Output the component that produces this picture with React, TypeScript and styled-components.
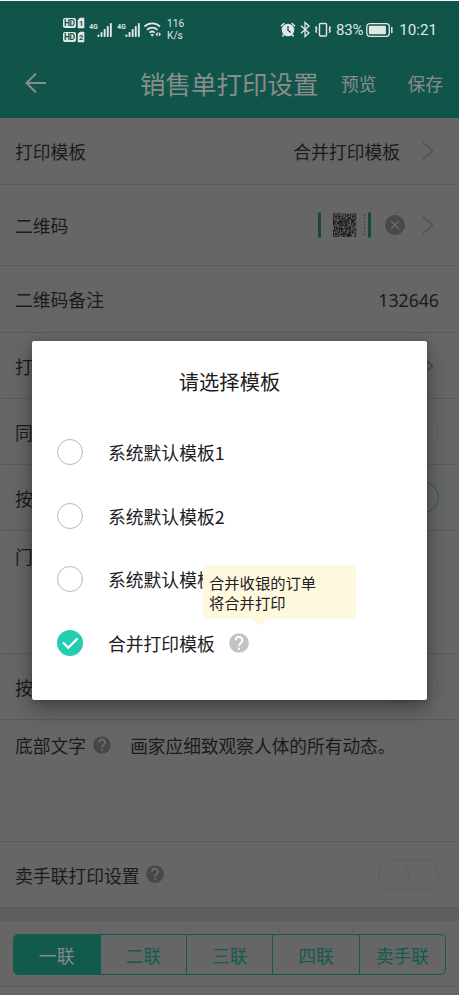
import React from 'react';
import styled, { createGlobalStyle } from 'styled-components';

const GlobalStyle = createGlobalStyle`
  * { box-sizing: border-box; }
  html, body { margin: 0; height: 100%; background: #666; }
  body { overflow: hidden; font-family: "Noto Sans CJK SC", "Noto Sans", sans-serif; color: #1b1b1b; }
`;

const Screen = styled.div`
  position: relative;
  width: 459px;
  height: 995px;
  overflow: hidden;
  background: #666;
  border-top: 1px solid #fafafa;
  font-size: 17.8px;
  line-height: 26px;
`;

const Top = styled.header`
  height: 117px;
  background: #11554a;
  color: #878d8b;
`;

const StatusBar = styled.div`
  height: 58px;
  padding: 0 22px 0 62px;
  display: flex;
  justify-content: space-between;
  align-items: center;
  color: #dfe8e5;
  font-family: Roboto, sans-serif;
`;

const StatusGroup = styled.div`
  display: flex;
  align-items: center;
`;

const Speed = styled.div`
  margin-left: 5px;
  font-size: 10.2px;
  line-height: 12px;
`;

const Percent = styled.span`
  margin: 0 3px 0 3px;
  font-size: 15px;
  letter-spacing: -0.2px;
`;

const Clock = styled.span`
  margin: 0 0 0 6px;
  font-size: 15.2px;
`;

const NavBar = styled.div`
  height: 48px;
  padding: 0 15px 1px 24px;
  display: flex;
  align-items: center;
`;

const Title = styled.h1`
  margin: 0 0 0 92px;
  width: 178px;
  font-size: 25.5px;
  font-weight: 400;
  line-height: 36px;
  white-space: nowrap;
`;

const NavAction = styled.span`
  margin-left: 23px;
  white-space: nowrap;
  & + & { margin-left: 31px; }
`;

const Row = styled.div<{ $h: number; $top?: boolean }>`
  height: ${(p) => p.$h}px;
  padding: ${(p) => (p.$top ? '12px' : '0')} 20px 0 15px;
  display: flex;
  align-items: ${(p) => (p.$top ? 'flex-start' : 'center')};
  border-bottom: 1px solid #5b5b5b;
`;

const Value = styled.div`
  margin-left: auto;
  display: flex;
  align-items: center;
`;

const NumberText = styled.span`
  margin-top: 1px;
  font-family: "Noto Sans", sans-serif;
  font-size: 17.7px;
`;

const Note = styled.span`
  margin-left: 19px;
  font-size: 17.7px;
`;

const Gap = styled.div<{ $h: number }>`
  height: ${(p) => p.$h}px;
  background: #5e5e5e;
`;

const Toggle = styled.span<{ $on?: boolean }>`
  width: 61px;
  height: 31px;
  margin-right: 0.5px;
  display: flex;
  justify-content: ${(p) => (p.$on ? 'flex-end' : 'flex-start')};
  border: 1px solid ${(p) => (p.$on ? '#205f51' : '#5e5e5e')};
  border-radius: 16px;
`;

const Knob = styled.span`
  width: 30px;
  height: 29px;
  border-right: 1px solid #5e5e5e;
  border-radius: 50%;
`;

const TabArea = styled.div`
  height: 66px;
  padding: 13px 13px 0 12.5px;
  border-bottom: 1px solid #5b5b5b;
`;

const Tabs = styled.div`
  height: 41px;
  display: grid;
  grid-template-columns: repeat(5, 1fr);
  border: 1px solid #125b4e;
  border-radius: 5px;
  overflow: hidden;
`;

const Tab = styled.div<{ $active?: boolean }>`
  display: flex;
  justify-content: center;
  align-items: center;
  color: ${(p) => (p.$active ? '#858b89' : '#125b4e')};
  background: ${(p) => (p.$active ? '#115a4c' : 'transparent')};
  & + & { border-left: 1px solid #125b4e; }
`;

const Dialog = styled.section`
  position: absolute;
  left: 32px;
  top: 340px;
  width: 395px;
  height: 359px;
  border-radius: 2px;
  background: #fff;
  color: #202020;
  box-shadow: 0 9px 22px rgba(0, 0, 0, 0.34), 0 1px 6px rgba(0, 0, 0, 0.18);
`;

const DialogTitle = styled.h2`
  margin: 0;
  padding-top: 25px;
  height: 79px;
  text-align: center;
  font-size: 20.3px;
  line-height: 30px;
  font-weight: 400;
`;

const Option = styled.div`
  height: 63.8px;
  padding-left: 25px;
  display: flex;
  align-items: center;
`;

const Radio = styled.span`
  width: 26px;
  height: 26px;
  border: 1px solid #b9b9b9;
  border-radius: 50%;
`;

const OptionText = styled.span`
  margin: 0 14px 0 25px;
`;

const Tooltip = styled.div`
  position: absolute;
  left: 170.5px;
  top: 223.5px;
  width: 153px;
  height: 54.5px;
  padding: 7px 0 0 6.5px;
  border-radius: 4px;
  background: #fef8df;
  font-size: 15.3px;
  line-height: 20.5px;
  &::after {
    content: '';
    position: absolute;
    left: 49px;
    top: 54px;
    border: 7px solid transparent;
    border-top-color: #fef8df;
    border-bottom: 0;
  }
`;

const Help = styled.svg`
  flex: none;
`;

const QrWrap = styled.svg`
  margin-right: 13px;
`;

function HelpIcon({ size, fill, mark }: { size: number; fill: string; mark: string }) {
  return (
    <Help width={size} height={size} viewBox="0 0 20 20" fill="none">
      <circle cx="10" cy="10" r="9.8" fill={fill} />
      <path d="M6.700 7.200a3.300 3.300 0 1 1 5.500 2.400c-1.300 1.100-2.200 1.600-2.200 3.400" stroke={mark} strokeWidth="1.900" />
      <circle cx="10" cy="15.800" r="1.200" fill={mark} />
    </Help>
  );
}

function Chevron({ dark }: { dark?: boolean }) {
  return (
    <svg width="12" height="20" viewBox="0 0 12 20" fill="none">
      <path d="M1 1.5 L10.5 10 L1 18.5" stroke={dark ? '#444' : '#4f4f4f'} strokeWidth="1.2" />
    </svg>
  );
}

function SimBadges() {
  return (
    <svg width="24" height="27" viewBox="0 0 24 27">
      {[1, 15].map((y, i) => (
        <g key={y}>
          <rect x="1" y={y} width="13" height="10" rx="2" fill="#dfe8e5" />
          <path d={`M16 ${y + 2}l2-2h4v10h-6z`} fill="#dfe8e5" stroke="#dfe8e5" strokeLinejoin="round" strokeWidth=".6" />
          <text x="2" y={y + 8.2} fontSize="8.5" fontWeight="700" fontFamily="Roboto, sans-serif" fill="#11554a" textLength="11">HD</text>
          <text x="17" y={y + 8} fontSize="7.5" fontWeight="700" fontFamily="Roboto, sans-serif" fill="#11554a">{i + 1}</text>
        </g>
      ))}
    </svg>
  );
}

function Signal() {
  return (
    <svg width="27.5" height="20" viewBox="0 0 27.5 20">
      <text x="3.3" y="8.500" fontSize="7.8" fontWeight="700" fontFamily="Roboto, sans-serif" fill="#dfe8e5" textLength="8.4" lengthAdjust="spacingAndGlyphs">4G</text>
      {[2.5, 5, 8, 11, 14].map((h, i) => (
        <rect key={h} x={11.5 + i * 3.1} y={17 - h} width="1.9" height={h} rx=".7" fill="#dfe8e5" />
      ))}
    </svg>
  );
}

const WifiGlyph = styled.svg`
  margin: 0 0 2px 2px;
`;

function Wifi() {
  return (
    <WifiGlyph width="19" height="17" viewBox="0 0 19 17" fill="none" stroke="#dfe8e5" strokeWidth="1.8">
      <path d="M1.5 5.5a11 11 0 0 1 15.500 0M4 8.800a7.400 7.400 0 0 1 10.500 0M6.600 11.600a3.800 3.800 0 0 1 5 0" />
      <path d="M7.200 13.300h4l-2 2.500z" fill="#dfe8e5" stroke="none" />
      <path d="M14.700 11l-2.300 2.300 2.300 2.300zM15.800 11l2.300 2.300-2.300 2.300z" fill="#dfe8e5" stroke="none" />
    </WifiGlyph>
  );
}

const DeviceGlyphs = styled.svg`
  margin-bottom: 2px;
`;

function DeviceIcons() {
  return (
    <DeviceGlyphs width="53" height="17" viewBox="0 0 53 17" fill="none" stroke="#dfe8e5">
      <circle cx="8" cy="9" r="6.300" fill="#dfe8e5" stroke="none" />
      <path d="M1 5.200 4.300 2M15 5.200 11.700 2M3.800 13.500l-1.300 2M12.200 13.500l1.300 2" strokeWidth="1.500" />
      <path d="M8 5v4.300l2.800 2.200" stroke="#11554a" strokeWidth="1.300" />
      <path d="M21 4.800l8 7.200-4 3.500v-14L29 5l-8 7.200" strokeWidth="1.300" />
      <rect x="39.500" y="2.500" width="7" height="12.500" rx="1" strokeWidth="1.400" />
      <path d="M36.700 5.300l-1 1.500 1 1.500-1 1.500 1 2M49.300 5.300l1 1.500-1 1.500 1 1.500-1 2" strokeWidth="1.400" />
    </DeviceGlyphs>
  );
}

const BatteryGlyph = styled.svg`
  margin-bottom: 1px;
`;

function Battery() {
  return (
    <BatteryGlyph width="27" height="16" viewBox="0 0 27 16" fill="none">
      <rect x=".8" y="1.700" width="22.500" height="12.600" rx="3" stroke="#dfe8e5" strokeWidth="1.300" />
      <rect x="2.900" y="3.700" width="17" height="8.600" rx="1" fill="#dfe8e5" />
      <path d="M25.800 5v6" stroke="#dfe8e5" strokeWidth="1.500" />
    </BatteryGlyph>
  );
}

const QR_SIZE = 27;
const isFinder = (x: number, y: number) => x < 7 && y < 7;

// Finder squares in three corners, a fixed hash for the data modules.
function qrModule(x: number, y: number): boolean {
  const corners = [[x, y], [QR_SIZE - 1 - x, y], [x, QR_SIZE - 1 - y]];
  for (const [a, b] of corners) {
    if (isFinder(a, b)) {
      const d = Math.max(Math.abs(a - 3), Math.abs(b - 3));
      return d !== 2;
    }
  }
  const n = Math.sin(x * 127.1 + y * 311.7) * 43758.5453;
  return n - Math.floor(n) < 0.6;
}

function QrStrip() {
  let d = '';
  for (let y = 0; y < QR_SIZE; y++) {
    for (let x = 0; x < QR_SIZE; x++) if (qrModule(x, y)) d += `M${x} ${y}h1v1h-1z`;
  }
  return (
    <QrWrap width="55" height="26" viewBox="0 0 55 26">
      <rect x="1" y="0.500" width="3" height="25" fill="#17483b" />
      <path d={d} fill="#1c1c1c" transform="translate(16 1.500) scale(.86)" />
      <path d="M47.500 2v22" stroke="#3c3c3c" strokeWidth="1" strokeDasharray="2 1.500 1 2" />
      <rect x="51" y="0.500" width="3" height="25" fill="#17483b" />
    </QrWrap>
  );
}

const ClearIcon = styled.svg`
  margin-right: -5px;
`;

const ArrowSlot = styled.span`
  display: flex;
  margin: 0 5px 0 22px;
`;

const HelpSlot = styled.span`
  display: flex;
  margin: -1px 0 0 7px;
`;

const HelpSlotTop = styled(HelpSlot)`
  margin-top: 4px;
`;

export default function App() {
  return (
    <>
      <GlobalStyle />
      <Screen>
        <Top>
          <StatusBar>
            <StatusGroup>
              <SimBadges />
              <Signal />
              <Signal />
              <Wifi />
              <Speed>116<br />K/s</Speed>
            </StatusGroup>
            <StatusGroup>
              <DeviceIcons />
              <Percent>83%</Percent>
              <Battery />
              <Clock>10:21</Clock>
            </StatusGroup>
          </StatusBar>
          <NavBar>
            <svg width="24" height="24" viewBox="0 0 24 24" fill="none">
              <path d="M22 12H3M12 2.500 2.500 12 12 21.500" stroke="#878d8b" strokeWidth="2" />
            </svg>
            <Title>销售单打印设置</Title>
            <NavAction>预览</NavAction>
            <NavAction>保存</NavAction>
          </NavBar>
        </Top>
        <Row $h={67}>
          打印模板
          <Value>合并打印模板<ArrowSlot><Chevron /></ArrowSlot></Value>
        </Row>
        <Row $h={81}>
          二维码
          <Value>
            <QrStrip />
            <ClearIcon width="20" height="20" viewBox="0 0 20 20" fill="none">
              <circle cx="10" cy="10" r="10" fill="#494949" />
              <path d="M6 6l8 8M14 6l-8 8" stroke="#6d6d6d" strokeWidth="1.200" />
            </ClearIcon>
            <ArrowSlot><Chevron /></ArrowSlot>
          </Value>
        </Row>
        <Row $h={67}>
          二维码备注
          <Value><NumberText>132646</NumberText></Value>
        </Row>
        <Row $h={66}>打印份数<Value><ArrowSlot><Chevron dark /></ArrowSlot></Value></Row>
        <Row $h={66}>同步打印<Value><Toggle><Knob /></Toggle></Value></Row>
        <Row $h={66}>按序打印<Value><Toggle $on /></Value></Row>
        <Row $h={123} $top>门店信息</Row>
        <Row $h={66}>按类打印<Value><Toggle><Knob /></Toggle></Value></Row>
        <Row $h={122} $top>
          底部文字
          <HelpSlotTop><HelpIcon size={18} fill="#484848" mark="#6d6d6d" /></HelpSlotTop>
          <Note>画家应细致观察人体的所有动态。</Note>
        </Row>
        <Row $h={66}>
          卖手联打印设置
          <HelpSlot><HelpIcon size={18} fill="#484848" mark="#6d6d6d" /></HelpSlot>
          <Value><Toggle><Knob /></Toggle></Value>
        </Row>
        <Gap $h={13} />
        <TabArea>
          <Tabs>
            <Tab $active>一联</Tab>
            <Tab>二联</Tab>
            <Tab>三联</Tab>
            <Tab>四联</Tab>
            <Tab>卖手联</Tab>
          </Tabs>
        </TabArea>
        <Dialog>
          <DialogTitle>请选择模板</DialogTitle>
          <Option><Radio /><OptionText>系统默认模板1</OptionText></Option>
          <Option><Radio /><OptionText>系统默认模板2</OptionText></Option>
          <Option><Radio /><OptionText>系统默认模板3</OptionText></Option>
          <Option>
            <svg width="26" height="26" viewBox="0 0 26 26" fill="none">
              <circle cx="13" cy="13" r="13" fill="#24cdb2" />
              <path d="M6.500 13l4.800 4.800L20 9" stroke="#fff" strokeWidth="2.200" strokeLinecap="round" />
            </svg>
            <OptionText>合并打印模板</OptionText>
            <HelpIcon size={20} fill="#c3c3c3" mark="#fff" />
          </Option>
          <Tooltip>合并收银的订单<br />将合并打印</Tooltip>
        </Dialog>
      </Screen>
    </>
  );
}
